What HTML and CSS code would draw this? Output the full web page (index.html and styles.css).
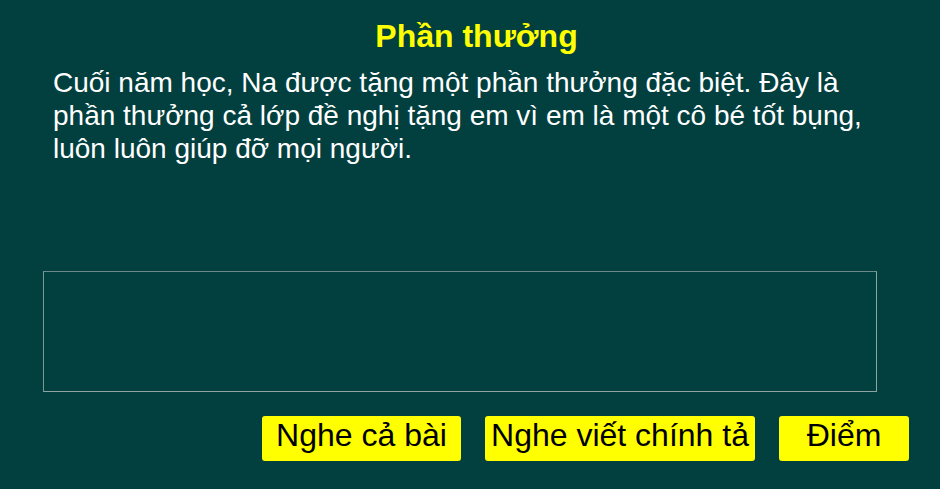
FILE: index.html
```html
<!DOCTYPE html>
<html lang="vi">
<head>
<meta charset="utf-8">
<title>Phần thưởng</title>
<link rel="stylesheet" href="styles.css">
</head>
<body>
<div class="page">
  <h1 class="title">Phần thưởng</h1>
  <p class="passage">Cuối năm học, Na được tặng một phần thưởng đặc biệt. Đây là phần thưởng cả lớp đề nghị tặng em vì em là một cô bé tốt bụng, luôn luôn giúp đỡ mọi người.</p>
  <div class="answer"></div>
  <div class="actions">
    <button class="btn btn-listen">Nghe cả bài</button>
    <button class="btn btn-dictate">Nghe viết chính tả</button>
    <button class="btn btn-score">Điểm</button>
  </div>
</div>
</body>
</html>
```
FILE: styles.css
```css
html, body {
  margin: 0;
  padding: 0;
  background: #023f3f;
}
.page {
  width: 940px;
  height: 489px;
  display: flex;
  flex-direction: column;
  font-family: "Liberation Sans", Arial, sans-serif;
}
.title {
  margin: 18px 0 0 0;
  text-align: center;
  color: #ffff00;
  font-size: 32px;
  font-weight: bold;
  line-height: 36px;
  padding-left: 13px;
}
.passage {
  margin: 12px 0 0 0;
  padding: 0 60px 0 53px;
  color: #ffffff;
  font-size: 28px;
  line-height: 33px;
}
.answer {
  margin: auto 0 0 43px;
  width: 832px;
  height: 119px;
  border: 1px solid #8fa3a3;
  border-top-color: #6f8a88;
  border-left-color: #7f9795;
}
.actions {
  display: flex;
  justify-content: flex-end;
  gap: 24px;
  padding: 24px 31px 28px 0;
}
.btn {
  height: 45px;
  background: #ffff00;
  border: none;
  border-radius: 3px;
  color: #000;
  font-family: "Liberation Sans", Arial, sans-serif;
  font-size: 32px;
  padding: 0 0 6px 0;
  text-align: center;
  white-space: nowrap;
}
.btn-listen { width: 199px; }
.btn-dictate { width: 270px; }
.btn-score { width: 130px; }
```
